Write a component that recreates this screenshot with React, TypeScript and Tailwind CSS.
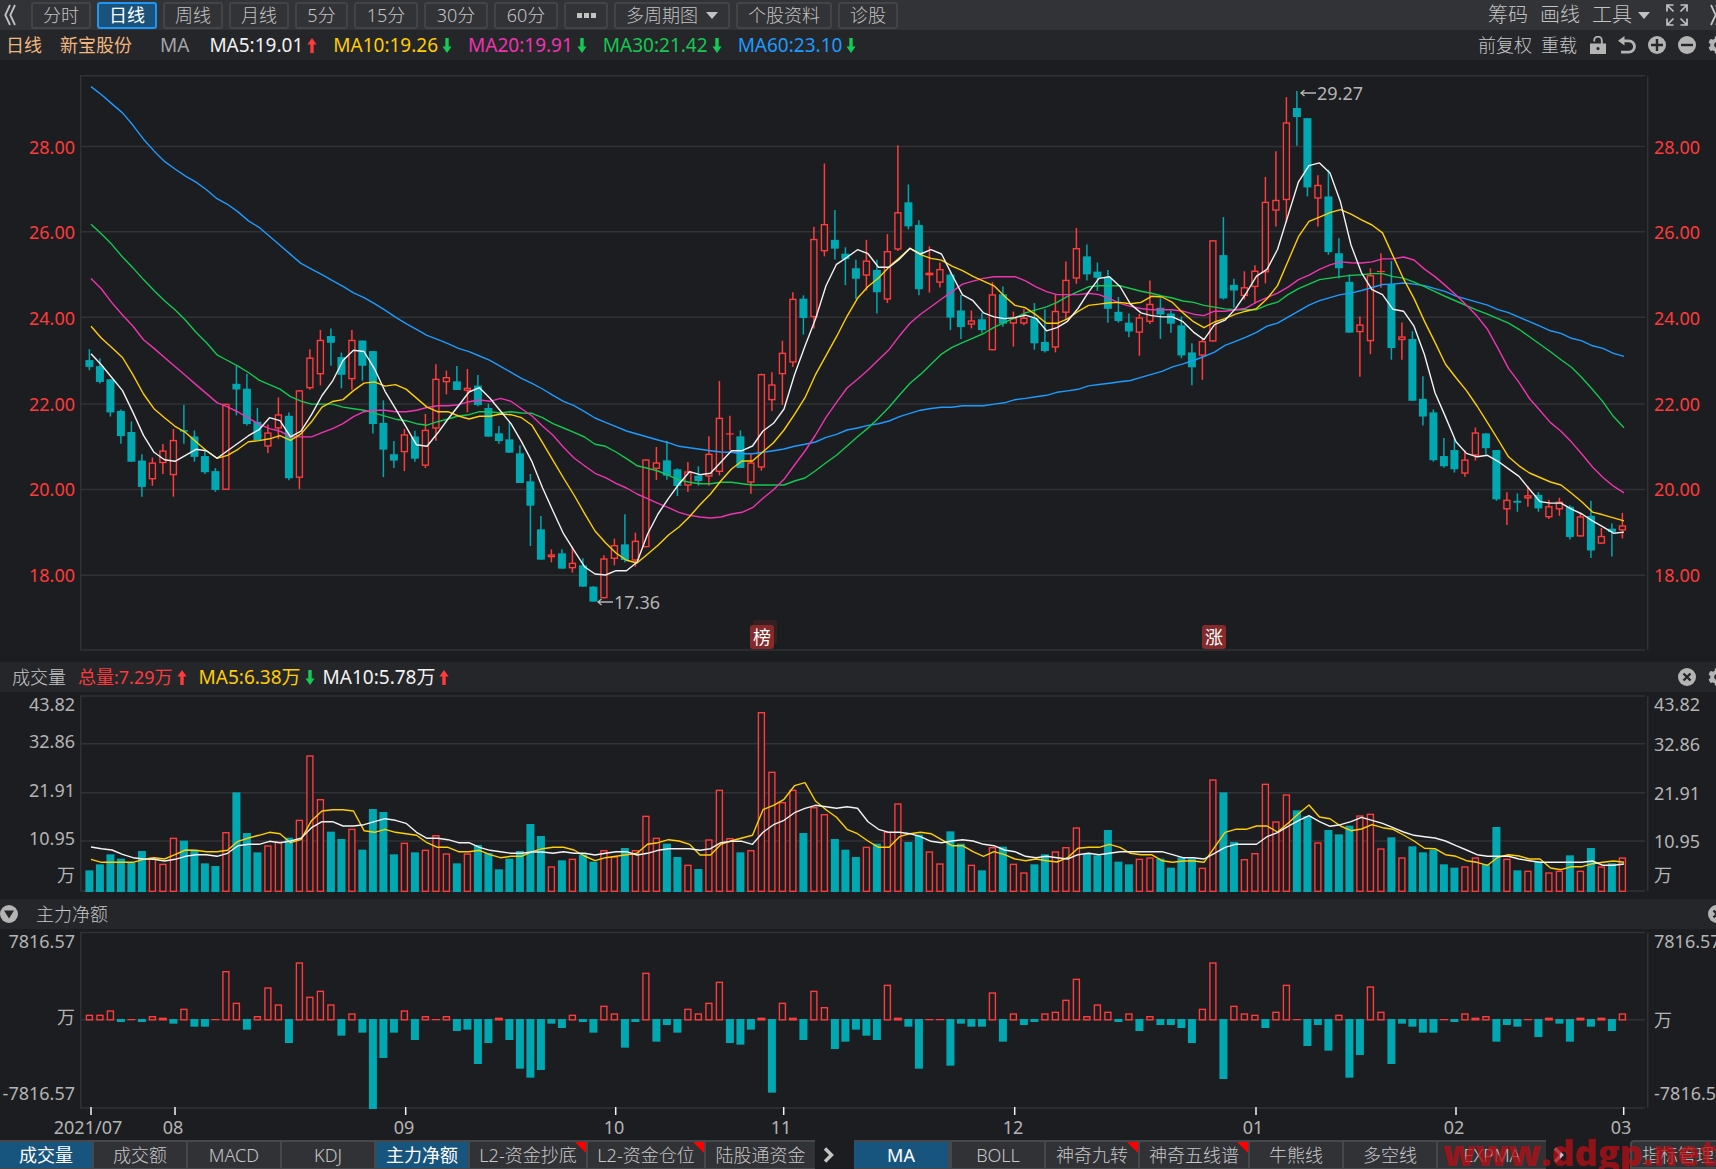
import React from "react";
import { FaCog } from "react-icons/fa";

const RED = "#ff3b3b";
const TEAL = "#00a8b2";
const GRID = "#313236";

/* ---------- geometry shared by the three panels ---------- */

const PLOT_LEFT = 80;
const PLOT_WIDTH = 1565;
const STEP = 10.5;
const barX = (i: number) => 89.4 + i * STEP;
const lineX = (i: number) => 91 + i * STEP;

type Panel = { top: number; height: number };
const PRICE: Panel = { top: 60, height: 602 };
const VOLUME: Panel = { top: 692, height: 207 };
const NET: Panel = { top: 929, height: 211 };

const pctY = (p: Panel, y: number) => `${((y - p.top) / p.height) * 100}%`;
const pctX = (x: number) => `${((x - PLOT_LEFT) / PLOT_WIDTH) * 100}%`;

/* Series are stored as integers in blocks; y = base + value * step. */
const q1 = (v: number[]) => v.map((n) => 70 + n * 0.37628);
const q2 = (v: number[]) => v.map((n) => 230 + n / 3);
const q3 = (v: number[]) => v.map((n) => 130 + n * 0.33801);
const low = (v: number[]) => v.map((n) => 655 + n / 3);

/* high, body top, body bottom, low, rising */
const candles: number[][] = [
  ...[
    [742, 771, 789, 798, 0], [766, 787, 829, 833, 0], [822, 822, 910, 921, 0], [902, 906, 973, 993, 0],
    [934, 962, 1041, 1041, 0], [1021, 1038, 1108, 1134, 0], [1030, 1043, 1088, 1105, 1], [994, 1011, 1045, 1074, 1],
    [954, 983, 1077, 1134, 1], [890, 957, 961, 993, 0], [958, 974, 1028, 1041, 0], [1012, 1026, 1069, 1074, 0],
    [1058, 1066, 1116, 1121, 0], [887, 887, 1116, 1116, 1], [787, 834, 849, 918, 0], [807, 847, 941, 945, 0],
    [898, 935, 984, 984, 0], [942, 963, 1001, 1018, 1], [870, 915, 953, 981, 1], [910, 919, 1085, 1090, 0],
    [851, 851, 1084, 1114, 1], [742, 764, 846, 850, 1], [691, 717, 809, 838, 1], [687, 707, 725, 786, 0],
    [751, 763, 810, 846, 0], [691, 717, 822, 850, 1], [719, 719, 786, 826, 0], [747, 747, 941, 966, 0],
    [878, 938, 1009, 1082, 0], [986, 1021, 1038, 1058, 0], [954, 968, 1016, 1066, 1], [959, 974, 1033, 1041, 0],
    [914, 956, 1052, 1058, 1],
  ].map((c) => [...q1(c.slice(0, 4)), c[4]]),
  ...[
    [403, 446, 596, 632, 1], [422, 441, 457, 493, 1], [408, 454, 480, 480, 0], [417, 473, 483, 547, 1],
    [435, 467, 525, 529, 0], [521, 534, 620, 620, 0], [588, 610, 633, 641, 0], [577, 628, 668, 668, 0],
    [646, 670, 759, 759, 0], [732, 754, 827, 948, 0], [858, 898, 989, 989, 0], [958, 973, 982, 997, 1],
    [958, 970, 1016, 1016, 0], [950, 998, 1015, 1028, 1], [985, 1006, 1070, 1070, 0], [1068, 1070, 1115, 1115, 0],
    [976, 985, 1105, 1105, 1], [926, 945, 987, 1006, 1], [853, 943, 990, 997, 0], [908, 932, 992, 1010, 1],
    [688, 688, 952, 952, 1], [651, 697, 717, 750, 1], [633, 691, 737, 749, 0], [715, 718, 768, 798, 0],
    [696, 724, 767, 786, 1], [709, 737, 753, 767, 0], [619, 671, 740, 767, 1], [453, 563, 726, 736, 1],
    [557, 610, 611, 661, 1], [601, 619, 714, 714, 0], [673, 697, 758, 791, 1], [431, 432, 713, 722, 1],
    [427, 463, 511, 543, 1], [332, 368, 433, 525, 1], [187, 206, 398, 411, 1], [196, 206, 264, 314, 0],
  ].map((c) => [...q2(c.slice(0, 4)), c[4]]),
  ...[
    [286, 322, 554, 587, 1], [99, 278, 359, 374, 1], [237, 325, 351, 383, 0], [347, 366, 382, 459, 0],
    [384, 409, 440, 500, 0], [325, 386, 431, 475, 1], [384, 414, 480, 543, 0], [308, 358, 502, 512, 1],
    [45, 243, 354, 358, 1], [161, 214, 285, 294, 0], [267, 281, 471, 489, 0], [344, 422, 430, 481, 1],
    [392, 411, 452, 466, 1], [418, 428, 555, 592, 0], [488, 534, 583, 618, 0], [534, 563, 576, 587, 1],
    [541, 560, 592, 600, 0], [450, 486, 652, 652, 1], [463, 486, 573, 582, 0], [537, 556, 573, 641, 1],
    [530, 555, 573, 578, 1], [512, 557, 631, 650, 0], [530, 627, 654, 658, 0], [486, 535, 644, 658, 1],
    [389, 443, 541, 560, 1], [290, 349, 440, 455, 1], [339, 374, 427, 445, 0], [392, 419, 437, 476, 0],
    [414, 438, 529, 570, 0], [494, 538, 565, 570, 0], [543, 570, 596, 613, 0], [544, 554, 600, 668, 1],
    [445, 514, 568, 574, 1], [498, 526, 546, 618, 0], [534, 543, 573, 600, 0], [552, 578, 667, 675, 0],
    [631, 658, 702, 755, 0], [618, 624, 668, 739, 1], [326, 326, 626, 626, 1],
  ].map((c) => [...q3(c.slice(0, 4)), c[4]]),
  ...[
    [391, 492, 607, 610, 0], [555, 571, 586, 632, 0], [535, 577, 601, 610, 1], [519, 533, 577, 621, 1],
    [284, 350, 538, 567, 1], [216, 345, 374, 416, 1], [72, 139, 346, 405, 1], [56, 101, 125, 201, 0],
    [128, 128, 312, 336, 0], [280, 305, 342, 416, 1], [265, 336, 484, 491, 0], [447, 487, 527, 554, 0],
    [543, 563, 698, 698, 0], [655, 676, 697, 815, 1], [527, 545, 721, 755, 1], [487, 534, 536, 579, 1],
    [508, 568, 739, 770, 0], [671, 708, 718, 770, 1], [694, 715, 879, 879, 0], [814, 874, 921, 945, 0],
    [902, 910, 1037, 1041, 0], [978, 1026, 1053, 1057, 0], [979, 1010, 1061, 1070, 0], [1011, 1035, 1073, 1081, 1],
    [950, 963, 1025, 1038, 1], [965, 966, 1005, 1022, 0], [1010, 1010, 1141, 1145, 0], [1122, 1142, 1168, 1209, 1],
    [1125, 1145, 1150, 1174, 0], [1106, 1130, 1139, 1161, 1], [1122, 1129, 1165, 1174, 0], [1142, 1159, 1189, 1193, 1],
    [1137, 1147, 1168, 1185, 1], [1157, 1161, 1241, 1248, 0], [1178, 1186, 1240, 1240, 1], [1145, 1185, 1277, 1297, 0],
    [1217, 1238, 1259, 1259, 1], [1205, 1219, 1228, 1293, 0], [1177, 1210, 1224, 1245, 1],
  ].map((c) => [...q1(c.slice(0, 4)), c[4]]),
];

const ma60 = [
  ...q1([44, 66, 90, 114, 147, 184, 215, 243, 263, 282, 298, 318, 342, 357, 377, 401, 418, 442, 466, 490, 514, 529, 544, 560, 575, 592, 605, 621, 638, 657, 674, 689, 705]),
  ...q2([328, 341, 355, 365, 378, 391, 409, 427, 445, 460, 477, 496, 514, 527, 545, 564, 577, 590, 603, 612, 621, 630, 638, 649, 653, 658, 662, 666, 667, 671, 671, 667, 662, 657, 649, 643, 636, 622, 613, 600, 594]),
  ...q3([874, 869, 861, 848, 838, 829, 824, 820, 820, 816, 816, 816, 811, 807, 798, 794, 789, 785, 776, 772, 767, 757, 753, 749, 745, 741, 732, 723, 714, 701, 692, 682, 670, 657]),
  ...q1([732, 721, 710, 697, 681, 673, 657, 641, 625, 613, 605, 597, 593, 586, 578, 570, 569, 566, 569, 573, 581, 589, 601, 609, 617, 625, 637, 645, 657, 669, 681, 693, 700, 713, 720, 733, 740, 753, 761]),
];
const ma30 = [
  ...q1([410, 436, 464, 497, 526, 557, 586, 613, 637, 665, 697, 725, 757, 772, 787, 804, 824, 836, 848, 868, 880, 888, 888, 888, 896, 900, 904, 912, 920, 928, 932, 940, 944]),
  ...q2([575, 567, 558, 554, 545, 545, 549, 545, 549, 550, 563, 581, 594, 607, 621, 643, 649, 666, 686, 707, 715, 723, 736, 750, 757, 761, 761, 757, 757, 761, 765, 765, 765, 765, 753, 744, 722, 698, 676, 648, 620]),
  ...q3([882, 852, 820, 784, 749, 723, 693, 663, 643, 629, 616, 602, 584, 569, 555, 541, 532, 523, 510, 492, 478, 464, 461, 461, 461, 469, 477, 483, 491, 497, 506, 510, 519, 524]),
  ...q1([635, 637, 637, 637, 625, 617, 597, 581, 569, 557, 553, 549, 546, 544, 541, 541, 549, 553, 564, 576, 589, 602, 614, 626, 638, 649, 661, 673, 689, 709, 729, 749, 770, 790, 818, 849, 882, 921, 951]),
];
const ma20 = [
  ...q1([554, 582, 619, 651, 681, 717, 740, 764, 788, 812, 836, 860, 884, 895, 909, 925, 941, 953, 960, 975, 975, 975, 964, 953, 940, 921, 908, 904, 904, 908, 908, 904, 897]),
  ...q2([527, 527, 524, 515, 510, 514, 505, 514, 536, 558, 588, 616, 652, 684, 707, 730, 743, 760, 774, 792, 806, 820, 833, 847, 856, 861, 864, 861, 852, 847, 833, 805, 779, 748, 705, 663, 615, 562, 517, 474, 448]),
  ...q3([710, 680, 650, 609, 572, 545, 523, 500, 478, 456, 447, 439, 434, 434, 434, 446, 464, 478, 487, 487, 487, 483, 487, 499, 513, 522, 528, 532, 532, 532, 536, 545, 549, 536]),
  ...q1([641, 637, 633, 617, 605, 593, 577, 557, 545, 530, 518, 510, 512, 513, 510, 502, 502, 497, 505, 529, 549, 573, 598, 625, 654, 689, 740, 793, 830, 873, 905, 937, 960, 989, 1021, 1055, 1083, 1106, 1124]),
];
const ma10 = [
  ...q1([681, 713, 738, 764, 810, 861, 900, 924, 947, 963, 988, 1012, 1032, 1024, 1008, 988, 985, 980, 972, 984, 967, 935, 896, 881, 876, 852, 832, 829, 840, 836, 848, 872, 896]),
  ...q2([545, 545, 558, 567, 559, 559, 552, 554, 563, 586, 638, 691, 744, 795, 850, 903, 938, 969, 991, 999, 973, 946, 915, 891, 860, 824, 792, 752, 717, 693, 693, 665, 638, 600, 553, 503, 434, 377, 320, 259, 205]),
  ...q3([463, 438, 405, 378, 350, 369, 380, 385, 403, 416, 433, 447, 461, 492, 519, 526, 547, 572, 572, 559, 537, 519, 515, 511, 510, 514, 510, 492, 494, 510, 541, 567, 585, 568]),
  ...q1([661, 649, 641, 634, 608, 573, 508, 443, 402, 391, 379, 371, 383, 398, 412, 433, 494, 555, 607, 668, 724, 782, 818, 852, 893, 937, 982, 1028, 1052, 1071, 1083, 1095, 1103, 1125, 1148, 1175, 1182, 1190, 1198]),
];
const ma5 = [
  ...q1([754, 784, 818, 852, 910, 971, 1016, 1036, 1040, 1024, 1008, 1012, 1032, 1012, 992, 972, 956, 924, 932, 975, 960, 916, 865, 827, 772, 745, 748, 794, 854, 900, 948, 996, 1000]),
  ...q2([610, 567, 527, 486, 473, 505, 543, 581, 635, 695, 773, 843, 911, 961, 1010, 1032, 1035, 1022, 1022, 997, 913, 852, 805, 762, 725, 734, 730, 696, 662, 662, 648, 603, 580, 537, 434, 348, 267, 167, 103, 82, 59]),
  ...q3([366, 406, 406, 382, 350, 367, 354, 367, 428, 488, 505, 541, 553, 558, 555, 548, 557, 594, 585, 566, 528, 480, 439, 434, 463, 515, 541, 549, 553, 553, 567, 598, 620, 576]),
  ...q1([665, 634, 594, 548, 530, 477, 387, 297, 254, 247, 274, 351, 465, 539, 584, 597, 636, 641, 681, 757, 858, 922, 988, 1019, 1028, 1024, 1040, 1060, 1080, 1114, 1147, 1151, 1151, 1167, 1180, 1198, 1214, 1231, 1228]),
];

const volumes = low([
  646, 628, 598, 611, 623, 588, 608, 626, 548, 557, 588, 625, 633, 531, 412, 534, 592, 571, 560, 548, 494, 301, 432, 530, 552, 521, 584, 462, 471, 598, 563, 592, 584, 540,
  595, 625, 595, 570, 594, 643, 611, 588, 507, 543, 634, 616, 611, 598, 620, 585, 604, 579, 585, 482, 548, 566, 606, 629, 642, 553, 404, 549, 592, 585, 171, 350, 441, 404, 534, 456, 477, 552, 584, 606, 575,
  566, 530, 445, 561, 539, 589, 625, 529, 566, 629, 646, 576, 575, 626, 652, 628, 598, 589, 576, 517, 597, 601, 525, 620, 628, 611, 607, 611, 638, 607, 611, 638, 373, 412, 561, 612, 594, 386, 499, 418, 466,
  484, 562, 525, 538, 512, 481, 476, 580, 547, 607, 574, 592, 584, 628, 638, 634, 607, 628, 516, 611, 646, 647, 620, 652, 647, 601, 647, 579, 634, 625, 607,
]);
const volMa5 = low([
  613, 622, 622, 622, 622, 613, 608, 612, 599, 585, 586, 590, 590, 586, 559, 549, 541, 532, 536, 563, 554, 497, 468, 464, 464, 468, 527, 532, 523, 532, 536, 541, 563, 577,
  577, 590, 590, 586, 599, 608, 604, 604, 590, 581, 577, 577, 585, 603, 617, 608, 604, 599, 595, 568, 563, 554, 558, 568, 600, 600, 568, 557, 549, 541, 464, 451, 433, 392, 383, 438, 464, 487, 523, 536, 558,
  577, 577, 545, 536, 532, 536, 554, 572, 572, 590, 604, 590, 599, 612, 617, 612, 617, 621, 608, 580, 577, 577, 568, 577, 595, 599, 599, 617, 622, 618, 618, 622, 577, 532, 523, 523, 513, 513, 531, 505, 476,
  450, 486, 491, 513, 527, 522, 509, 518, 523, 540, 558, 580, 581, 599, 604, 617, 622, 631, 607, 599, 603, 612, 612, 639, 644, 635, 635, 626, 622, 618, 622,
]);
const volMa10 = low([
  576, 581, 585, 598, 608, 612, 613, 618, 613, 604, 599, 599, 604, 595, 572, 568, 568, 559, 563, 558, 550, 518, 500, 500, 513, 513, 509, 500, 491, 496, 505, 532, 550, 550,
  554, 563, 563, 577, 586, 590, 595, 595, 591, 591, 595, 590, 595, 595, 600, 595, 590, 590, 600, 595, 586, 581, 581, 581, 586, 581, 563, 559, 559, 568, 532, 509, 496, 473, 460, 451, 455, 460, 455, 460, 500,
  523, 532, 532, 536, 545, 559, 563, 558, 554, 558, 568, 572, 585, 590, 604, 608, 604, 608, 612, 599, 595, 599, 595, 590, 590, 590, 590, 590, 599, 608, 608, 612, 595, 577, 568, 568, 568, 545, 533, 514, 497,
  482, 500, 514, 509, 500, 487, 496, 505, 518, 531, 541, 545, 549, 558, 572, 585, 599, 604, 604, 604, 612, 617, 622, 622, 622, 622, 622, 618, 631, 631, 627,
]);

/* 1093 is the zero line */
const netFlow = [
  1079, 1079, 1066, 1101, 1093, 1101, 1083, 1088, 1106, 1061, 1115, 1115, 1093, 948, 1043, 1124, 1083, 997, 1048, 1164, 922, 1025, 1007, 1048, 1142, 1075, 1133, 1362, 1209, 1133, 1066, 1155, 1083, 1093,
  1083, 1128, 1124, 1227, 1164, 1088, 1155, 1241, 1268, 1245, 1106, 1119, 1079, 1101, 1133, 1052, 1075, 1178, 1101, 953, 1160, 1110, 1133, 1061, 1075, 1043, 980, 1164, 1169, 1124, 1088, 1313, 1043, 1088, 1155, 1007, 1056, 1182, 1160, 1124, 1142,
  1155, 989, 1088, 1115, 1241, 1093, 1093, 1232, 1106, 1115, 1115, 1012, 1160, 1075, 1110, 1101, 1075, 1070, 1034, 971, 1083, 1048, 1070, 1101, 1075, 1128, 1083, 1110, 1110, 1119, 1164, 1061, 922, 1272, 1052, 1075, 1079, 1119, 1070, 989, 1093,
  1173, 1110, 1187, 1079, 1268, 1200, 994, 1070, 1227, 1106, 1115, 1133, 1133, 1093, 1101, 1075, 1088, 1083, 1160, 1110, 1115, 1093, 1146, 1088, 1106, 1160, 1088, 1115, 1088, 1128, 1075,
];

/* ---------- chart primitives ---------- */

function Bar({ i, top, bottom, rising }: { i: number; top: number; bottom: number; rising: boolean }) {
  const x = barX(i);
  if (!rising) return <rect x={x - 4} y={top} width={8} height={Math.max(bottom - top, 1.5)} fill={TEAL} />;
  if (bottom - top < 3) return <rect x={x - 4} y={top} width={8} height={Math.max(bottom - top, 1.2)} fill={RED} />;
  return (
    <rect x={x - 3} y={top + 0.7} width={6} height={bottom - top - 1.4} fill="#1c1d20" stroke={RED} strokeWidth={1.4} />
  );
}

function Line({ values, color }: { values: number[]; color: string }) {
  return (
    <polyline
      points={values.map((y, i) => `${lineX(i)},${y.toFixed(1)}`).join(" ")}
      fill="none"
      stroke={color}
      strokeWidth={1.4}
      strokeLinejoin="round"
    />
  );
}

function Frame({ top, bottom, lines }: { top: number; bottom: number; lines: number[] }) {
  return (
    <g stroke={GRID} strokeWidth={1.5}>
      {[top, ...lines, bottom].map((y) => (
        <line key={y} x1={PLOT_LEFT} x2={PLOT_LEFT + PLOT_WIDTH} y1={y} y2={y} />
      ))}
      <line x1={80.7} x2={80.7} y1={top} y2={bottom} />
    </g>
  );
}

type Tick = [string, number];

function Axis({ panel, ticks, side, color }: { panel: Panel; ticks: Tick[]; side: "left" | "right"; color: string }) {
  return (
    <div className={`relative shrink-0 text-[18px] leading-6 ${color} ${side === "left" ? "w-20" : "w-[71px]"}`}>
      {ticks.map(([label, y]) => (
        <span
          key={label}
          className={`absolute -translate-y-1/2 whitespace-nowrap ${side === "left" ? "right-[5px]" : "left-[9px]"}`}
          style={{ top: pctY(panel, y) }}
        >
          {label}
        </span>
      ))}
    </div>
  );
}

function ChartRow({
  panel,
  className,
  frame,
  left,
  right,
  color,
  label,
  children,
  overlay,
}: {
  panel: Panel;
  className: string;
  frame: [number, number];
  left: Tick[];
  right: Tick[];
  color: string;
  label: string;
  children: React.ReactNode;
  overlay?: React.ReactNode;
}) {
  return (
    <section className={`flex min-h-0 ${className}`} aria-label={label}>
      <Axis panel={panel} ticks={left} side="left" color={color} />
      <div className="relative min-w-0 flex-1">
        <svg
          className="absolute inset-0 h-full w-full overflow-visible"
          viewBox={`${PLOT_LEFT} ${panel.top} ${PLOT_WIDTH} ${panel.height}`}
          preserveAspectRatio="none"
          role="img"
          aria-label={label}
        >
          {children}
          <line x1={1647.7} x2={1647.7} y1={frame[0]} y2={frame[1]} stroke={GRID} strokeWidth={1.5} />
        </svg>
        {overlay}
      </div>
      <Axis panel={panel} ticks={right} side="right" color={color} />
    </section>
  );
}

/* ---------- icons ---------- */

function Trend({ up }: { up?: boolean }) {
  return (
    <svg width="10" height="15" viewBox="0 0 10 15" className="ml-1 shrink-0" aria-hidden="true">
      {up ? (
        <path d="M5 0 9.6 6.4H6.7V15H3.3V6.400H.4Z" fill={RED} />
      ) : (
        <path d="M5 15 9.600 8.600H6.700V0H3.300v8.600H.4Z" fill="#14cc55" />
      )}
    </svg>
  );
}

const Caret = () => (
  <svg width="12" height="7" viewBox="0 0 12 7" fill="currentColor" aria-hidden="true">
    <path d="M0 0h12L6 7Z" />
  </svg>
);

const DoubleChevron = ({ flip }: { flip?: boolean }) => (
  <svg width="12" height="22" viewBox="0 0 12 22" className={flip ? "-scale-x-100" : ""} fill="none" stroke="currentColor" strokeWidth="1.8" aria-hidden="true">
    <path d="M6 1 1.3 11 6 21M11 1 6.3 11 11 21" />
  </svg>
);

const Chevron = () => (
  <svg width="12" height="16" viewBox="0 0 12 16" fill="none" stroke="#c4c4c4" strokeWidth="3.4" aria-hidden="true">
    <path d="m2 1.5 6.5 6.5L2 14.5" />
  </svg>
);

const Expand = () => (
  <svg width="22" height="22" viewBox="0 0 22 22" fill="none" stroke="currentColor" strokeWidth="1.7" aria-hidden="true">
    <path d="M1 7.500V1h6.500M1.500 1.500l6 6M14.500 1H21v6.500M20.500 1.500l-6 6M1 14.500V21h6.500M1.500 20.500l6-6M14.500 21H21v-6.500M20.500 20.500l-6-6" />
  </svg>
);

const Unlock = () => (
  <svg width="16" height="18" viewBox="0 0 16 18" aria-hidden="true">
    <path d="M4.200 5.500V4.400a3.800 3.800 0 0 1 7.600 0V8" fill="none" stroke="currentColor" strokeWidth="1.800" />
    <path fillRule="evenodd" d="M0 7.500h16V18H0ZM8 11a1.600 1.600 0 1 0 0 3.200A1.600 1.600 0 0 0 8 11Z" fill="currentColor" />
  </svg>
);

const Undo = () => (
  <svg width="18" height="18" viewBox="0 0 18 18" aria-hidden="true">
    <path d="M4 4.800h6.800a5.700 5.700 0 0 1 0 11.400H3" fill="none" stroke="currentColor" strokeWidth="2.800" />
    <path d="M0 4.800 6.500 0v9.600Z" fill="currentColor" />
  </svg>
);

const Disc = ({ d, width = 2.4 }: { d: string; width?: number }) => (
  <svg width="18" height="18" viewBox="0 0 18 18" aria-hidden="true">
    <circle cx="9" cy="9" r="9" fill="currentColor" />
    <path d={d} stroke="#25262a" strokeWidth={width} fill="none" />
  </svg>
);

const CLOSE = "M5.500 5.500l7 7M12.500 5.500l-7 7";

function IconButton({ label, children }: { label: string; children: React.ReactNode }) {
  return (
    <button type="button" aria-label={label} className="flex shrink-0 items-center">
      {children}
    </button>
  );
}

/* ---------- bars ---------- */

const periods: { label: string; width: string; active?: boolean }[] = [
  { label: "分时", width: "w-[60px]" },
  { label: "日线", width: "w-[60px]", active: true },
  { label: "周线", width: "w-[60px]" },
  { label: "月线", width: "w-[60px]" },
  { label: "5分", width: "w-[53px]" },
  { label: "15分", width: "w-16" },
  { label: "30分", width: "w-16" },
  { label: "60分", width: "w-16" },
];

const toolButton = "flex h-[27px] shrink-0 items-center justify-center rounded-[3px] border-2 border-[#434448] whitespace-nowrap";

function Toolbar() {
  return (
    <div className="flex h-[30px] shrink-0 items-center bg-[#323337] pl-1 text-[18px] font-light text-[#c2c2c2]">
      <IconButton label="收起">
        <DoubleChevron />
      </IconButton>
      <div className="ml-[15px] flex gap-1.5">
        {periods.map((p) => (
          <button
            key={p.label}
            type="button"
            className={`${p.active ? "flex h-[27px] shrink-0 items-center justify-center rounded-[3px] border-2 border-[#1e96f5] bg-[#1a527c] font-normal whitespace-nowrap text-white" : toolButton} ${p.width}`}
          >
            {p.label}
          </button>
        ))}
        <button type="button" aria-label="更多周期" className={`${toolButton} w-11 gap-0.5`}>
          <i className="h-[5px] w-[5px] bg-current" />
          <i className="h-[5px] w-[5px] bg-current" />
          <i className="h-[5px] w-[5px] bg-current" />
        </button>
        <button type="button" aria-haspopup="menu" className={`${toolButton} w-[116px] gap-2`}>
          多周期图
          <Caret />
        </button>
        <button type="button" className={`${toolButton} w-24`}>个股资料</button>
        <button type="button" className={`${toolButton} w-[60px]`}>诊股</button>
      </div>
      <div className="-mr-1.5 ml-auto flex shrink-0 items-center gap-3 pl-4 text-[20px]">
        <button type="button">筹码</button>
        <button type="button">画线</button>
        <button type="button" aria-haspopup="menu" className="flex items-center gap-1.5">
          工具
          <Caret />
        </button>
        <span className="ml-1 flex items-center gap-[22px]">
          <IconButton label="全屏">
            <Expand />
          </IconButton>
          <IconButton label="展开">
            <DoubleChevron flip />
          </IconButton>
        </span>
      </div>
    </div>
  );
}

function LegendItem({ text, color, up }: { text: string; color: string; up?: boolean }) {
  return (
    <span className={`flex items-center ${color}`}>
      {text}
      <Trend up={up} />
    </span>
  );
}

function PriceHeader() {
  return (
    <div className="flex h-[30px] shrink-0 items-center bg-[#25262a] pl-1.5 text-[18px] whitespace-nowrap text-[#b4b4b4]">
      <span className="text-[#f0b67d]">日线</span>
      <span className="ml-[18px] text-[#f0b67d]">新宝股份</span>
      <div className="ml-7 flex gap-4 text-[19px]">
        <span className="mr-1 text-[#a4a5a8]">MA</span>
        <LegendItem text="MA5:19.01" color="text-[#f2f2f2]" up />
        <LegendItem text="MA10:19.26" color="text-[#ffce00]" />
        <LegendItem text="MA20:19.91" color="text-[#ee34b0]" />
        <LegendItem text="MA30:21.42" color="text-[#14c850]" />
        <LegendItem text="MA60:23.10" color="text-[#1e9bff]" />
      </div>
      <div className="-mr-2.5 ml-auto flex shrink-0 items-center gap-3">
        <div className="mr-px flex gap-[9px] font-light text-[#c6c6c6]">
          <button type="button">前复权</button>
          <button type="button">重载</button>
        </div>
        <IconButton label="解锁">
          <Unlock />
        </IconButton>
        <IconButton label="撤销">
          <Undo />
        </IconButton>
        <IconButton label="放大">
          <Disc d="M9 3v12M3 9h12" />
        </IconButton>
        <IconButton label="缩小">
          <Disc d="M3 9h12" />
        </IconButton>
        <IconButton label="设置">
          <FaCog size={18} />
        </IconButton>
      </div>
    </div>
  );
}

function Badge({ x, children }: { x: number; children: string }) {
  return (
    <span
      className="absolute flex h-6 w-6 items-center justify-center rounded-[3px] bg-[#842a2b] text-[18px] leading-none text-white"
      style={{ left: pctX(x), top: pctY(PRICE, 625) }}
    >
      {children}
    </span>
  );
}

function Extreme({ x, y, children }: { x: number; y: number; children: string }) {
  return (
    <span
      className="absolute flex -translate-y-1/2 items-center gap-px text-[18px] leading-6 text-[#b4b4b4]"
      style={{ left: pctX(x), top: pctY(PRICE, y) }}
    >
      <svg width="16" height="8" viewBox="0 0 16 8" fill="none" stroke="currentColor" strokeWidth="1.4" aria-hidden="true">
        <path d="M16 4H1M4.500 1 1 4l3.500 3" />
      </svg>
      {children}
    </span>
  );
}

const priceTicks: Tick[] = [
  ["28.00", 147], ["26.00", 232], ["24.00", 318], ["22.00", 404], ["20.00", 489], ["18.00", 575],
];

const months: [string, number, number][] = [
  ["2021/07", 88, 91], ["08", 173, 175], ["09", 404, 405.7], ["10", 614, 615.7], ["11", 781, 783.7],
  ["12", 1013, 1014.7], ["01", 1253, 1256], ["02", 1454, 1456], ["03", 1621, 1623.7],
];

type Tab = { label: string; width: string; active?: boolean; mark?: boolean };

const subTabs: Tab[] = [
  { label: "成交量", width: "w-[92px]", active: true },
  { label: "成交额", width: "w-[92px]" },
  { label: "MACD", width: "w-[92px]" },
  { label: "KDJ", width: "w-[92px]" },
  { label: "主力净额", width: "w-[92px]", active: true },
  { label: "L2-资金抄底", width: "w-[116px]", mark: true },
  { label: "L2-资金仓位", width: "w-[116px]", mark: true },
  { label: "陆股通资金", width: "w-[109px]" },
];
const mainTabs: Tab[] = [
  { label: "MA", width: "w-[94px] mr-0.5", active: true },
  { label: "BOLL", width: "w-[92px]" },
  { label: "神奇九转", width: "w-[92px]", mark: true },
  { label: "神奇五线谱", width: "w-[108px]", mark: true },
  { label: "牛熊线", width: "w-[92px]" },
  { label: "多空线", width: "w-[92px]" },
  { label: "EXPMA", width: "w-[108px]" },
];

function TabStrip({ tabs, label }: { tabs: Tab[]; label: string }) {
  return (
    <div role="tablist" aria-label={label} className="flex h-full shrink-0 gap-0.5 bg-[#47484c] pt-0.5 pb-px">
      {tabs.map((t) => (
        <button
          key={t.label}
          type="button"
          role="tab"
          aria-selected={!!t.active}
          className={`relative shrink-0 whitespace-nowrap ${t.width} ${t.active ? "bg-[#17557f] font-normal text-white" : "bg-[#313236]"}`}
        >
          {t.label}
          {t.mark && (
            <i className="absolute top-0 right-0 h-[11px] w-[11px] bg-[#ff0000] [clip-path:polygon(0_0,100%_0,100%_100%)]" />
          )}
        </button>
      ))}
    </div>
  );
}

export default function App() {
  return (
    <main className="relative flex h-screen min-h-[700px] flex-col overflow-hidden bg-[#1c1d20] font-['Noto_Sans','Noto_Sans_CJK_SC',sans-serif] text-[#b4b4b4]">
      <Toolbar />
      <PriceHeader />

      <ChartRow
        panel={PRICE}
        className="flex-[602_1_0%]"
        frame={[75.7, 650]}
        left={priceTicks}
        right={priceTicks}
        color="text-[#ff3a3a]"
        label="日线K线图"
        overlay={
          <>
            <Extreme x={1300} y={93}>29.27</Extreme>
            <Extreme x={597} y={602}>17.36</Extreme>
            <Badge x={750}>榜</Badge>
            <Badge x={1202}>涨</Badge>
          </>
        }
      >
        <Frame top={75.7} bottom={650} lines={[146.4, 231.8, 317.3, 403.9, 489.5, 575.3]} />
        <rect x={753} y={620} width={24} height={24} rx={2} fill="#341f21" />
        {candles.map(([h, t, b, l, up], i) => (
          <g key={i}>
            <line x1={barX(i)} x2={barX(i)} y1={h} y2={l} stroke={up ? RED : TEAL} strokeWidth={1.5} />
            <Bar i={i} top={t} bottom={b} rising={!!up} />
          </g>
        ))}
        <Line values={ma60} color="#1e9bff" />
        <Line values={ma30} color="#14c850" />
        <Line values={ma20} color="#ee34b0" />
        <Line values={ma10} color="#ffce00" />
        <Line values={ma5} color="#f2f2f2" />
      </ChartRow>

      <div className="flex h-[30px] shrink-0 items-center gap-3 bg-[#25262a] pl-3 text-[18px] whitespace-nowrap">
        <span className="font-light text-[#c6c6c6]">成交量</span>
        <LegendItem text="总量:7.29万" color="text-[#ff3a3a]" up />
        <div className="flex gap-2 text-[19px]">
          <LegendItem text="MA5:6.38万" color="text-[#ffce00]" />
          <LegendItem text="MA10:5.78万" color="text-[#f2f2f2]" up />
        </div>
        <div className="-mr-2.5 ml-auto flex gap-3">
          <IconButton label="关闭成交量">
            <Disc d={CLOSE} />
          </IconButton>
          <IconButton label="成交量设置">
            <FaCog size={18} />
          </IconButton>
        </div>
      </div>

      <ChartRow
        panel={VOLUME}
        className="flex-[207_1_0%]"
        frame={[696, 891]}
        left={[["43.82", 704], ["32.86", 741], ["21.91", 790], ["10.95", 838], ["万", 875]]}
        right={[["43.82", 704], ["32.86", 744], ["21.91", 793], ["10.95", 841], ["万", 875]]}
        color="text-[#b4b4b4]"
        label="成交量"
      >
        <Frame top={696} bottom={891} lines={[743.7, 792.7, 841]} />
        {volumes.map((y, i) => (
          <Bar key={i} i={i} top={y} bottom={892} rising={!!candles[i][4]} />
        ))}
        <Line values={volMa5} color="#ffce00" />
        <Line values={volMa10} color="#f2f2f2" />
      </ChartRow>

      <div className="flex h-[30px] shrink-0 items-center bg-[#25262a] text-[18px]">
        <IconButton label="折叠">
          <svg width="18" height="18" viewBox="0 0 18 18" aria-hidden="true">
            <circle cx="9" cy="9" r="9" fill="currentColor" />
            <path d="M4 5.500h10l-5 8Z" fill="#25262a" />
          </svg>
        </IconButton>
        <span className="ml-[18px] font-light text-[#c6c6c6]">主力净额</span>
        <div className="-mr-2.5 ml-auto flex">
          <IconButton label="关闭主力净额">
            <Disc d={CLOSE} />
          </IconButton>
        </div>
      </div>

      <ChartRow
        panel={NET}
        className="flex-[211_1_0%]"
        frame={[932.5, 1108]}
        left={[["7816.57", 941], ["万", 1017], ["-7816.57", 1093]]}
        right={[["7816.57", 941], ["万", 1020], ["-7816.57", 1093]]}
        color="text-[#b4b4b4]"
        label="主力净额"
        overlay={months.map(([m, x]) => (
          <span
            key={m}
            className="absolute -translate-x-1/2 -translate-y-1/2 text-[18px] leading-6"
            style={{ left: pctX(x), top: pctY(NET, 1127) }}
          >
            {m}
          </span>
        ))}
      >
        <Frame top={932.5} bottom={1108} lines={[1019.7]} />
        {netFlow.map((n, i) =>
          n > 1093 ? (
            <Bar key={i} i={i} top={1019} bottom={655 + n / 3} rising={false} />
          ) : n === 1093 ? (
            <Bar key={i} i={i} top={1019} bottom={1020.2} rising />
          ) : (
            <Bar key={i} i={i} top={655 + n / 3} bottom={1020.5} rising />
          ),
        )}
        {months.map(([m, , x]) => (
          <line key={m} x1={x} x2={x} y1={1107} y2={1115} stroke="#f2f2f2" strokeWidth={1.5} />
        ))}
      </ChartRow>

      <div className="relative flex h-[29px] shrink-0 items-center text-[18px] font-light whitespace-nowrap text-[#c6c6c6]">
        <TabStrip tabs={subTabs} label="副图指标" />
        <button type="button" aria-label="更多副图指标" className="flex w-[39px] shrink-0 justify-center pr-3">
          <Chevron />
        </button>
        <TabStrip tabs={mainTabs} label="主图指标" />
        <button type="button" aria-label="更多主图指标" className="flex w-[30px] shrink-0 justify-center pr-1">
          <Chevron />
        </button>
        <button
          type="button"
          className="-mr-2.5 ml-auto h-full shrink-0 rounded-tl border-2 border-[#47484c] bg-[#313236] px-2.5"
        >
          指标管理
        </button>
        <span className="pointer-events-none absolute right-0 -bottom-1 font-['Open_Sans'] text-[36px] leading-10 font-extrabold text-[#b40f14]/75">
          www.ddgp.net
        </span>
      </div>
    </main>
  );
}
